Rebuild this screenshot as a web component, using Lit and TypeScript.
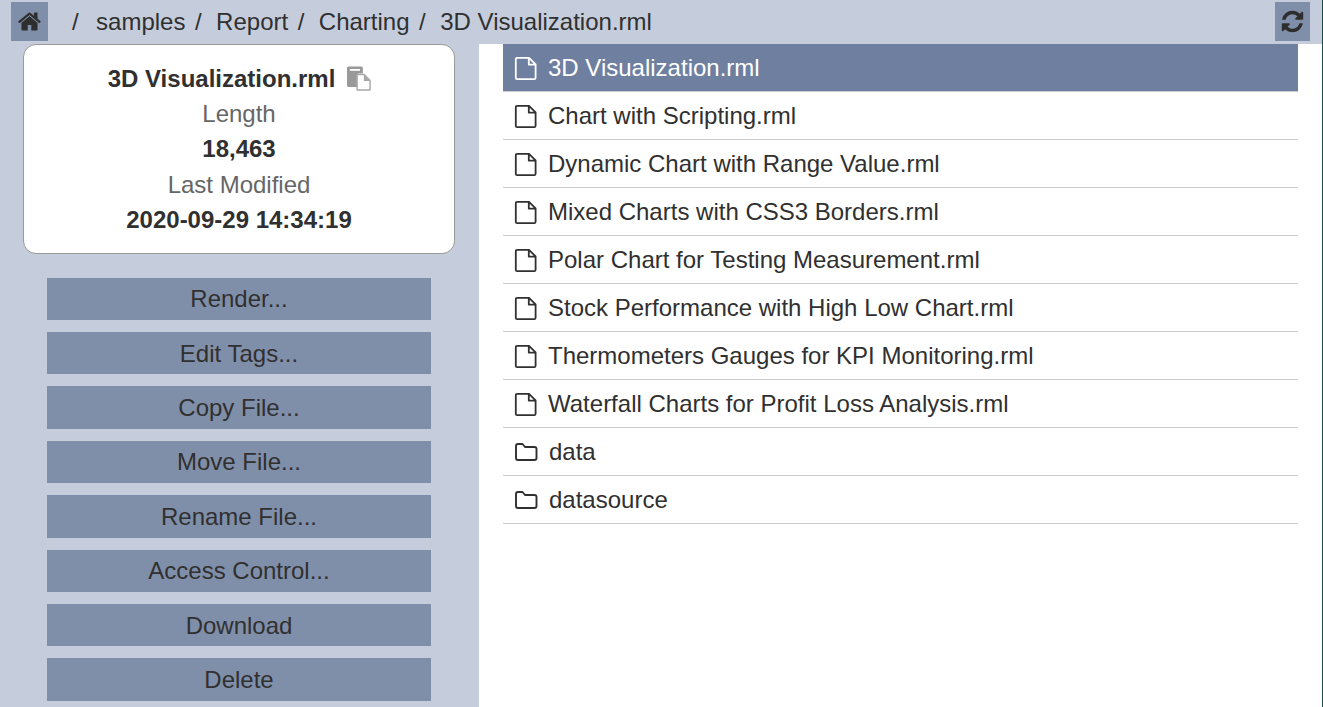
import { LitElement, html, css } from "lit";
import { customElement } from "lit/decorators.js";

const files = [
  "3D Visualization.rml",
  "Chart with Scripting.rml",
  "Dynamic Chart with Range Value.rml",
  "Mixed Charts with CSS3 Borders.rml",
  "Polar Chart for Testing Measurement.rml",
  "Stock Performance with High Low Chart.rml",
  "Thermometers Gauges for KPI Monitoring.rml",
  "Waterfall Charts for Profit Loss Analysis.rml",
];
const folders = ["data", "datasource"];
const actions = ["Render...", "Edit Tags...", "Copy File...", "Move File...", "Rename File...", "Access Control...", "Download", "Delete"];
const crumbs = ["samples", "Report", "Charting", "3D Visualization.rml"];

const fileIcon = html`<svg class="ico" width="23" height="25" viewBox="0 0 23 25"><path d="M3.200 1.800H15L21.600 8.400V21.800a1.400 1.400 0 0 1-1.400 1.400H3.200a1.400 1.400 0 0 1-1.400-1.400V3.200a1.400 1.400 0 0 1 1.400-1.400Z M14.800 2V8.600H21.400" fill="none" stroke="currentColor" stroke-width="1.800" stroke-linejoin="round"/></svg>`;
const folderIcon = html`<svg class="ico" width="24" height="20" viewBox="0 0 24 20"><path d="M2 4a2 2 0 0 1 2-2h4.500l2.500 3h9.500a2 2 0 0 1 2 2v9a2 2 0 0 1-2 2H4a2 2 0 0 1-2-2Z" fill="none" stroke="currentColor" stroke-width="1.900" stroke-linejoin="round"/></svg>`;

@customElement("app-root")
export class AppRoot extends LitElement {
  static styles = css`
    :host { display: block; box-sizing: border-box; height: 707px; overflow: hidden; background: #fff; color: #303030; border-right: 1px solid #1d4a4a; font-family: "Liberation Sans", Arial, sans-serif; font-size: 24px; }
    .top { display: flex; align-items: flex-start; height: 44px; box-sizing: border-box; padding: 2px 12px 0 11px; background: #c5cddc; }
    .tbtn { flex: none; width: 37px; height: 39px; background: #808fa9; display: flex; align-items: center; justify-content: center; color: #2e2e2e; }
    .tbtn.r { width: 35px; }
    .crumbs { flex: 1; display: flex; height: 40px; align-items: center; padding-left: 24px; white-space: nowrap; }
    .sep { margin-right: 14.500px; }
    .sep.first { margin-right: 17.400px; }
    .crumb { margin-right: 9.500px; }
    .main { display: flex; height: 663px; }
    .side { flex: none; width: 479px; box-sizing: border-box; padding: 0 24px 0 23px; background: #c5cddc; }
    .card { box-sizing: border-box; height: 209.600px; padding: 16px 0; background: #fff; border: 1px solid #999; border-radius: 13px; text-align: center; line-height: 35.200px; }
    .card .t { display: flex; justify-content: center; align-items: center; font-weight: 700; padding-left: 1px; }
    .copy { margin-left: 12px; }
    .lab { color: #666; }
    .b { font-weight: 700; }
    .acts { display: flex; flex-direction: column; gap: 12px; padding: 24px 24px 0; }
    .act { box-sizing: border-box; height: 42.400px; padding-top: 0.600px; line-height: 41.800px; text-align: center; background: #808fa9; }
    .list { flex: 1; padding: 0 24px 0 24px; }
    .row { display: flex; align-items: center; box-sizing: border-box; height: 48px; padding-left: 11px; border-bottom: 1px solid #ccc; white-space: nowrap; }
    .row.sel { background: #6f7fa0; color: #fff; }
    .ico { flex: none; margin: 2px 11px 0 0; }
    .folder .ico { margin: 1px 11px 0 0; }
  `;

  render() {
    return html`
      <div class="top">
        <div class="tbtn">
          <svg width="25" height="25" viewBox="0 0 1792 1792"><path fill="currentColor" d="M1472 992v480q0 26-19 45t-45 19h-384v-384h-256v384h-384q-26 0-45-19t-19-45v-480q0-1 .5-3t.5-3l575-474 575 474q1 2 1 6zm223-69l-62 74q-8 9-21 11h-3q-13 0-21-7l-692-577-692 577q-12 8-24 7-13-2-21-11l-62-74q-8-10-7-23.500t11-21.500l719-599q32-26 76-26t76 26l244 204v-195q0-14 9-23t23-9h192q14 0 23 9t9 23v408l219 182q10 8 11 21.500t-7 23.500z"/></svg>
        </div>
        <div class="crumbs">
          ${crumbs.map((c, i) => html`<span class="sep ${i === 0 ? "first" : ""}">/</span><span class="crumb">${c}</span>`)}
        </div>
        <div class="tbtn r">
          <svg width="25" height="25" viewBox="0 0 1792 1792"><path fill="currentColor" d="M1639 1056q0 5-1 7-64 268-268 434.500t-478 166.500q-146 0-282.500-55t-243.500-157l-129 129q-19 19-45 19t-45-19-19-45v-448q0-26 19-45t45-19h448q26 0 45 19t19 45-19 45l-137 137q71 66 161 102t187 36q134 0 250-65t186-179q11-17 53-117 8-23 30-23h192q13 0 22.500 9.500t9.500 22.500zm25-800v448q0 26-19 45t-45 19h-448q-26 0-45-19t-19-45 19-45l138-138q-148-137-349-137-134 0-250 65t-186 179q-11 17-53 117-8 23-30 23h-199q-13 0-22.500-9.500t-9.500-22.500v-7q65-268 270-434.500t480-166.500q146 0 284 55.500t245 156.500l130-129q19-19 45-19t45 19 19 45z"/></svg>
        </div>
      </div>
      <div class="main">
        <div class="side">
          <div class="card">
            <div class="t">3D Visualization.rml
              <svg class="copy" width="24" height="25" viewBox="0 0 25 25" preserveAspectRatio="none"><path fill="#999" d="M1.500 .5h13.500a1.500 1.500 0 0 1 1.500 1.500v5.500h-4a2 2 0 0 0-2 2V21H1.500A1.500 1.500 0 0 1 0 19.500V2A1.500 1.500 0 0 1 1.500 .5Z"/><rect x="3" y="3" width="10.500" height="1.800" fill="#fff"/><path fill="#fff" stroke="#a8a8a8" stroke-width="1.500" stroke-linejoin="round" d="M10.500 8.500H18L24 14.500V24H10.500Z"/><path fill="#a8a8a8" d="M17.500 8.500V15H24Z"/></svg>
            </div>
            <div class="lab">Length</div>
            <div class="b">18,463</div>
            <div class="lab">Last Modified</div>
            <div class="b">2020-09-29 14:34:19</div>
          </div>
          <div class="acts">${actions.map((a) => html`<div class="act">${a}</div>`)}</div>
        </div>
        <div class="list">
          ${files.map((f, i) => html`<div class="row ${i === 0 ? "sel" : ""}">${fileIcon}<span>${f}</span></div>`)}
          ${folders.map((f) => html`<div class="row folder">${folderIcon}<span>${f}</span></div>`)}
        </div>
      </div>
    `;
  }
}
